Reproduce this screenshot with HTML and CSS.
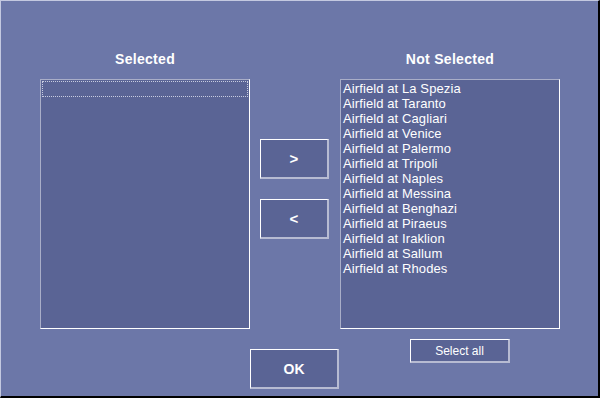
FILE: index.html
```html
<!DOCTYPE html>
<html lang="en">
<head>
    <meta charset="UTF-8">
    <title>Select Targets</title>
    <link rel="stylesheet" href="styles.css">
</head>
<body>
    <div class="dialog">
        <!-- Column headers -->
        <div class="col-label">Selected</div>
        <div></div>
        <div class="col-label">Not Selected</div>

        <!-- Lists and move buttons -->
        <div class="listbox">
            <div class="item focus"></div>
        </div>
        <div class="move-buttons">
            <button class="btn btn-move">&gt;</button>
            <button class="btn btn-move">&lt;</button>
        </div>
        <div class="listbox">
            <div class="item">Airfield at La Spezia</div>
            <div class="item">Airfield at Taranto</div>
            <div class="item">Airfield at Cagliari</div>
            <div class="item">Airfield at Venice</div>
            <div class="item">Airfield at Palermo</div>
            <div class="item">Airfield at Tripoli</div>
            <div class="item">Airfield at Naples</div>
            <div class="item">Airfield at Messina</div>
            <div class="item">Airfield at Benghazi</div>
            <div class="item">Airfield at Piraeus</div>
            <div class="item">Airfield at Iraklion</div>
            <div class="item">Airfield at Sallum</div>
            <div class="item">Airfield at Rhodes</div>
        </div>

        <!-- Bottom row -->
        <div></div>
        <div class="ok-cell">
            <button class="btn btn-ok">OK</button>
        </div>
        <div class="select-cell">
            <button class="btn btn-select">Select all</button>
        </div>
    </div>
</body>
</html>
```

FILE: styles.css
```css
* {
    margin: 0;
    padding: 0;
    box-sizing: border-box;
}

body {
    width: 600px;
    height: 398px;
    overflow: hidden;
    font-family: 'Liberation Sans', Arial, sans-serif;
    background: #6c77a8;
}

/* Dialog frame */
.dialog {
    width: 600px;
    height: 398px;
    background: #6c77a8;
    border-style: solid;
    border-width: 1px 2px 2px 1px;
    border-color: #c4c9e0 #000 #000 #c4c9e0;
    padding: 49px 0 0 39px;
    display: grid;
    grid-template-columns: 210px 90px 220px;
    grid-template-rows: 29px 250px 1fr;
}

.col-label {
    font-size: 14px;
    font-weight: bold;
    color: #fff;
    text-align: center;
    line-height: 18px;
    letter-spacing: 0.3px;
}

/* List boxes */
.listbox {
    background: #5a6495;
    border-style: solid;
    border-width: 1px;
    border-color: #a9aec8 #fff #fff #a9aec8;
    padding: 1px;
}

.item {
    font-size: 13px;
    line-height: 15px;
    color: #fff;
    padding-left: 1px;
    letter-spacing: 0.1px;
    white-space: nowrap;
}

.item.focus {
    height: 16px;
    border: 1px dotted #000;
    outline: 1px dotted #c8cce0;
    outline-offset: -1px;
}

/* Buttons */
.btn {
    display: block;
    background: #5a6495;
    color: #fff;
    font-family: 'Liberation Sans', Arial, sans-serif;
    border-style: solid;
    border-width: 1px 2px 2px 1px;
    border-color: #fff #b7bbd2 #b7bbd2 #fff;
    cursor: pointer;
}

.move-buttons {
    display: flex;
    flex-direction: column;
    gap: 20px;
    padding: 60px 0 0 10px;
}

.btn-move {
    width: 69px;
    height: 40px;
    font-size: 15px;
    font-weight: bold;
}

.ok-cell {
    padding-top: 20px;
}

.btn-ok {
    width: 89px;
    height: 40px;
    font-size: 14px;
    font-weight: bold;
}

.select-cell {
    padding: 10px 0 0 70px;
}

.btn-select {
    width: 100px;
    height: 24px;
    font-size: 12px;
}
```
